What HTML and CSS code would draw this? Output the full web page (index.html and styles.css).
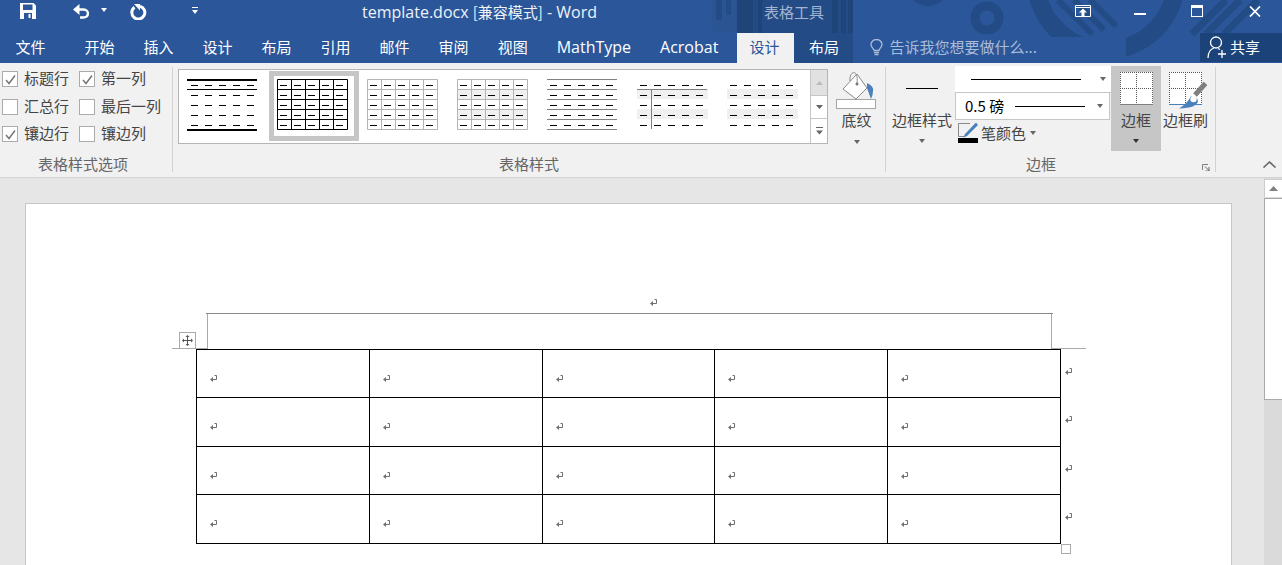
FILE: index.html
```html
<!DOCTYPE html>
<html lang="zh">
<head>
<meta charset="utf-8">
<title>template.docx [兼容模式] - Word</title>
<link rel="stylesheet" href="styles.css">
</head>
<body>
<svg class="defs" aria-hidden="true">
  <defs>
    <symbol id="ret" viewBox="0 0 7 8"><path d="M4.500 1.500H6.500V5.500H2" fill="none" stroke="#707070"/><path d="M0 5.500L3 3V8Z" fill="#707070"/></symbol>
    <g id="dashes" stroke="#000" stroke-dasharray="7 7">
      <path d="M3 6.500H67M3 16.500H67M3 26.500H67M3 36.500H67M3 46.500H67"/>
    </g>
    <path id="grid" fill="none" d="M.5 .5H70.500V50.500H.5ZM14.500 .5V50.500M28.500 .5V50.500M42.500 .5V50.500M56.500 .5V50.500M.5 10.500H70.500M.5 20.500H70.500M.5 30.500H70.500M.5 40.500H70.500"/>
    <path id="bands" fill="#f0f0f0" d="M0 10H71V20H0ZM0 30H71V40H0Z"/>
    <path id="chk" d="M3 8L6 11.500L12 3.500" fill="none" stroke="#777" stroke-width="1.500"/>
    <path id="dots" fill="none" stroke="#555" stroke-dasharray="1 1" d="M0 .5H33M0 16.500H33M.5 0V32M16.500 0V32M32.500 0V32"/>
  </defs>
</svg>

<header class="top">
  <svg class="art" width="1282" height="63" viewBox="0 0 1282 63" aria-hidden="true">
    <rect x="737" width="116" height="63" fill="#234b85"/>
    <path d="M712 0h25v33h-25z" fill="#2a5592"/>
    <path d="M716 0h6v20h-6zM726 0h5v15h-5z" fill="#234b85"/>
    <path d="M737 0h16v33h-16zM758 0h4v33h-4zM832 0h21v33h-21z" fill="#1f4478"/>
    <path d="M838 0h3v33h-3zM846 0h2v33h-2z" fill="#234b85"/>
    <circle cx="928" cy="-14" r="20" fill="#234b85"/>
    <circle cx="987" cy="18" r="12" fill="none" stroke="#234b85" stroke-width="9"/>
    <circle cx="1106" cy="-20" r="70" fill="none" stroke="#234b85" stroke-width="18"/>
    <path d="M1048 12L1082 46M1058 0L1092 34M1074 0L1104 30M1090 0L1116 26" stroke="#234b85" stroke-width="6"/>
    <path d="M1192 34L1226 0M1206 34L1240 0M1224 34L1258 0" stroke="#234b85" stroke-width="7"/>
    <rect x="853" y="37" width="273" height="26" fill="#2b579a"/>
    <path d="M1126 40L1150 36L1126 57Z" fill="#234b85"/>
  </svg>

  <div class="titlebar">
    <svg class="i-save" width="16" height="16" viewBox="0 0 16 16" aria-hidden="true"><path d="M0 0H13.500L16 2.500V16H0Z" fill="#fff"/><path d="M3 1.500H12.500V7H3Z" fill="#2b579a"/><path d="M4 10H12V16H4Z" fill="#2b579a"/><path d="M8.500 11H10.500V15H8.500Z" fill="#fff"/></svg>
    <svg class="i-undo" width="17" height="15" viewBox="0 0 17 15" aria-hidden="true"><path d="M2 5.500H10.500C16.500 5.500 16.500 13.500 10 13.500H7" fill="none" stroke="#fff" stroke-width="2.400"/><path d="M6.500 0V11L0 5.500Z" fill="#fff"/></svg>
    <span class="caret caret-undo"></span>
    <svg class="i-redo" width="17" height="16" viewBox="0 0 17 16" aria-hidden="true"><path d="M4.500 3.200A6.500 6.500 0 1 0 10 2.200" fill="none" stroke="#fff" stroke-width="3"/><path d="M4 0H10V6.500Z" fill="#fff"/></svg>
    <svg class="i-more" width="6" height="8" viewBox="0 0 6 8" aria-hidden="true"><path d="M0 .5H6" stroke="#fff"/><path d="M0 3H6L3 7Z" fill="#fff"/></svg>
    <span class="doc-title">template.docx <span class="cjk">[兼容模式]</span> - Word</span>
    <span class="context">表格工具</span>
    <svg class="i-ropt" width="16" height="12" viewBox="0 0 16 12" aria-hidden="true"><path d="M.5 .5H15.500V11.500H.5ZM.5 2.500H15.500" fill="none" stroke="#fff"/><path d="M8 3.500L12 7.500H9.500V11H6.500V7.500H4Z" fill="#fff"/></svg>
    <span class="i-min"></span>
    <span class="i-max"></span>
    <svg class="i-close" width="12" height="11" viewBox="0 0 12 11" aria-hidden="true"><path d="M1 .5L11 10.500M11 .5L1 10.500" stroke="#fff" stroke-width="1.700"/></svg>
  </div>

  <nav class="tabs">
    <span class="tab tab-file">文件</span>
    <span class="tab">开始</span>
    <span class="tab">插入</span>
    <span class="tab">设计</span>
    <span class="tab">布局</span>
    <span class="tab">引用</span>
    <span class="tab">邮件</span>
    <span class="tab">审阅</span>
    <span class="tab">视图</span>
    <span class="tab latin">MathType</span>
    <span class="tab latin">Acrobat</span>
    <span class="tab tab-active">设计</span>
    <span class="tab">布局</span>
    <svg class="i-bulb" width="13" height="17" viewBox="0 0 13 17" aria-hidden="true"><path d="M4 11.500C4 9.500 1 8.500 1 5.500A5.500 5 0 0 1 12 5.500C12 8.500 9 9.500 9 11.500Z" fill="none" stroke="#a9bcd8" stroke-width="1.300"/><path d="M4 13.500H9M4.500 15.500H8.500" stroke="#a9bcd8" stroke-width="1.400"/></svg>
    <span class="search">告诉我您想要做什么...</span>
    <span class="share">
      <svg width="20" height="24" viewBox="0 0 20 24" aria-hidden="true"><circle cx="9" cy="7.500" r="5.500" fill="none" stroke="#fff" stroke-width="1.300"/><path d="M1 23C1 17 4 14 7 13M11 13.500L13 14.500" fill="none" stroke="#fff" stroke-width="1.300"/><path d="M15 15V23M11 19H19" stroke="#fff" stroke-width="1.300"/></svg>
      <span>共享</span>
    </span>
  </nav>
</header>

<section class="ribbon">
  <div class="group g-options">
    <div class="body options">
      <label class="opt"><span class="box"><svg width="14" height="14" viewBox="0 0 14 14" aria-hidden="true"><use href="#chk"/></svg></span>标题行</label>
      <label class="opt"><span class="box"><svg width="14" height="14" viewBox="0 0 14 14" aria-hidden="true"><use href="#chk"/></svg></span>第一列</label>
      <label class="opt"><span class="box"></span>汇总行</label>
      <label class="opt"><span class="box"></span>最后一列</label>
      <label class="opt"><span class="box"><svg width="14" height="14" viewBox="0 0 14 14" aria-hidden="true"><use href="#chk"/></svg></span>镶边行</label>
      <label class="opt"><span class="box"></span>镶边列</label>
    </div>
    <div class="glabel gl-options">表格样式选项</div>
  </div>
  <div class="sep"></div>

  <div class="group g-styles">
    <div class="body styles">
      <div class="gallery">
        <div class="items">
          <div class="thumb"><svg width="71" height="53" viewBox="0 0 71 53" aria-hidden="true"><path d="M0 0H70V2H0ZM0 50H70V52H0ZM0 10H70V11H0Z" fill="#000"/><use href="#dashes" x="1"/></svg></div>
          <div class="thumb selected"><svg width="71" height="53" viewBox="0 0 71 53" aria-hidden="true"><use href="#grid" stroke="#000"/><use href="#dashes"/></svg></div>
          <div class="thumb"><svg width="71" height="53" viewBox="0 0 71 53" aria-hidden="true"><use href="#grid" stroke="#b4b4b4"/><use href="#dashes"/></svg></div>
          <div class="thumb"><svg width="71" height="53" viewBox="0 0 71 53" aria-hidden="true"><use href="#bands"/><use href="#grid" stroke="#b4b4b4"/><use href="#dashes"/></svg></div>
          <div class="thumb"><svg width="71" height="53" viewBox="0 0 71 53" aria-hidden="true"><path d="M0 .5H70M0 10.500H70M0 20.500H70M0 30.500H70M0 40.500H70M0 50.500H70" stroke="#808080"/><use href="#dashes"/></svg></div>
          <div class="thumb"><svg width="71" height="53" viewBox="0 0 71 53" aria-hidden="true"><use href="#bands"/><path d="M0 10.500H70M14.500 10V50" stroke="#808080" fill="none"/><use href="#dashes"/></svg></div>
          <div class="thumb"><svg width="71" height="53" viewBox="0 0 71 53" aria-hidden="true"><use href="#bands"/><use href="#dashes"/></svg></div>
        </div>
        <div class="gscroll">
          <span class="gs gs-up"><svg width="7" height="4" viewBox="0 0 7 4" aria-hidden="true"><path d="M3.500 0L7 4H0Z" fill="#bbb"/></svg></span>
          <span class="gs gs-down"><svg width="7" height="4" viewBox="0 0 7 4" aria-hidden="true"><path d="M0 0H7L3.500 4Z" fill="#666"/></svg></span>
          <span class="gs gs-more"><svg width="7" height="8" viewBox="0 0 7 8" aria-hidden="true"><path d="M0 .5H7" stroke="#666"/><path d="M0 3.500H7L3.500 7.500Z" fill="#666"/></svg></span>
        </div>
      </div>
      <div class="big shade">
        <svg class="big-icon" width="41" height="40" viewBox="0 0 41 40" aria-hidden="true">
          <path d="M21 4L31 18L20 29L7 19Z" fill="#fff" stroke="#8a8a8a"/>
          <path d="M14 11C13 0 23 -1 21 13" fill="none" stroke="#8a8a8a"/>
          <circle cx="21" cy="14" r="1.500" fill="#777"/>
          <path d="M31 13Q38 16 37 21Q37 25 35 29L31 18Z" fill="#4a80bb"/>
          <rect x=".5" y="29.500" width="39" height="9" fill="#fff" stroke="#a5a5a5"/>
        </svg>
        <span class="big-label">底纹</span>
        <span class="caret"></span>
      </div>
    </div>
    <div class="glabel">表格样式</div>
  </div>
  <div class="sep"></div>

  <div class="group g-borders">
    <div class="body borders">
      <div class="big bstyle">
        <span class="bstyle-line"></span>
        <span class="big-label">边框样式</span>
        <span class="caret"></span>
      </div>
      <div class="pickers">
        <div class="picker p-style"><span class="pline"></span><span class="caret"></span></div>
        <div class="picker p-weight"><span class="weight">0.5 磅</span><span class="pline"></span><span class="caret"></span></div>
        <div class="pen">
          <svg width="20" height="21" viewBox="0 0 20 21" aria-hidden="true"><path d="M12 1.500H.5V14.500H6" fill="none" stroke="#8a8a8a"/><path d="M18 .5L20 3L9 14L5.500 15.500L7 12Z" fill="#4a80bb"/><rect y="16" width="20" height="5" fill="#000"/></svg>
          <span>笔颜色</span>
          <span class="caret"></span>
        </div>
      </div>
      <div class="big bborder">
        <svg class="big-icon" width="33" height="33" viewBox="0 0 33 33" aria-hidden="true">
          <rect width="33" height="32" fill="#fff"/>
          <use href="#dots"/>
          <path d="M0 32.500H33" stroke="#808080"/>
        </svg>
        <span class="big-label">边框</span>
        <span class="caret dark"></span>
      </div>
      <div class="big bpaint">
        <svg class="big-icon" width="38" height="38" viewBox="0 0 38 38" aria-hidden="true">
          <rect width="33" height="32" fill="#fff"/>
          <use href="#dots"/>
          <path d="M0 32.500H33" stroke="#4a80bb"/>
          <path d="M36.500 11.500L26 23" stroke="#808080" stroke-width="5"/>
          <path d="M22 24A6 6 0 0 1 29 29Q28 36 10 36.500Q18 32 22 24Z" fill="#4a80bb"/>
          <circle cx="24.500" cy="27" r="3.200" fill="#fff"/>
        </svg>
        <span class="big-label">边框刷</span>
      </div>
    </div>
    <div class="glabel gl-borders">边框</div>
    <svg class="launcher" width="8" height="7" viewBox="0 0 8 7" aria-hidden="true"><path d="M.5 6V.5H6" fill="none" stroke="#808080"/><path d="M3 2.500L7 6.500M7 3V7H3.500" fill="none" stroke="#666"/></svg>
  </div>
  <div class="sep"></div>
  <svg class="collapse" width="15" height="7" viewBox="0 0 15 7" aria-hidden="true"><path d="M1.500 6.500L7.500 1L13.500 6.500" fill="none" stroke="#666" stroke-width="1.600"/></svg>
</section>

<main class="doc">
  <div class="page">
    <svg class="ret para" width="7" height="8" aria-hidden="true"><use href="#ret"/></svg>
    <div class="frame">
      <span class="crop crop-l"></span>
      <span class="crop crop-r"></span>
      <span class="move"><svg width="11" height="11" viewBox="0 0 11 11" aria-hidden="true"><path d="M5.500 1V10M1 5.500H10" stroke="#555"/><path d="M5.500 0L7.500 2H3.500ZM5.500 11L7.500 9H3.500ZM0 5.500L2 3.500V7.500ZM11 5.500L9 3.500V7.500Z" fill="#555"/></svg></span>
    </div>
    <div class="table-wrap">
      <table class="tbl">
        <tbody>
          <tr class="r-a"><td><svg class="ret" width="7" height="8"><use href="#ret"/></svg></td><td><svg class="ret" width="7" height="8"><use href="#ret"/></svg></td><td class="narrow"><svg class="ret" width="7" height="8"><use href="#ret"/></svg></td><td><svg class="ret" width="7" height="8"><use href="#ret"/></svg></td><td><svg class="ret" width="7" height="8"><use href="#ret"/></svg></td><td class="rowend"><svg class="ret" width="7" height="8"><use href="#ret"/></svg></td></tr>
          <tr class="r-b"><td><svg class="ret" width="7" height="8"><use href="#ret"/></svg></td><td><svg class="ret" width="7" height="8"><use href="#ret"/></svg></td><td class="narrow"><svg class="ret" width="7" height="8"><use href="#ret"/></svg></td><td><svg class="ret" width="7" height="8"><use href="#ret"/></svg></td><td><svg class="ret" width="7" height="8"><use href="#ret"/></svg></td><td class="rowend"><svg class="ret" width="7" height="8"><use href="#ret"/></svg></td></tr>
          <tr class="r-a"><td><svg class="ret" width="7" height="8"><use href="#ret"/></svg></td><td><svg class="ret" width="7" height="8"><use href="#ret"/></svg></td><td class="narrow"><svg class="ret" width="7" height="8"><use href="#ret"/></svg></td><td><svg class="ret" width="7" height="8"><use href="#ret"/></svg></td><td><svg class="ret" width="7" height="8"><use href="#ret"/></svg></td><td class="rowend"><svg class="ret" width="7" height="8"><use href="#ret"/></svg></td></tr>
          <tr class="r-b"><td><svg class="ret" width="7" height="8"><use href="#ret"/></svg></td><td><svg class="ret" width="7" height="8"><use href="#ret"/></svg></td><td class="narrow"><svg class="ret" width="7" height="8"><use href="#ret"/></svg></td><td><svg class="ret" width="7" height="8"><use href="#ret"/></svg></td><td><svg class="ret" width="7" height="8"><use href="#ret"/></svg></td><td class="rowend"><svg class="ret" width="7" height="8"><use href="#ret"/></svg></td></tr>
        </tbody>
      </table>
      <span class="resize"></span>
    </div>
  </div>
  <aside class="vscroll">
    <span class="vs-up"><svg width="9" height="5" viewBox="0 0 9 5" aria-hidden="true"><path d="M4.500 0L9 5H0Z" fill="#808080"/></svg></span>
    <span class="vs-thumb"></span>
  </aside>
</main>
</body>
</html>
```
FILE: styles.css
```css
* { box-sizing: border-box; }
html, body { margin: 0; height: 565px; overflow: hidden; }
body {
  width: 1282px;
  font: 15px/20px "Noto Sans CJK SC", "Open Sans", sans-serif;
  color: #444;
  background: #e6e6e6;
}
svg { display: block; flex: none; }
.defs { position: absolute; width: 0; height: 0; }

/* title + tabs */
.top { position: relative; height: 63px; background: #2b579a; color: #fff; }
.art { position: absolute; left: 0; top: 0; }
.titlebar, .tabs { position: relative; display: flex; align-items: center; }
.titlebar { height: 33px; padding-left: 20px; }
.caret {
  display: block; flex: none; width: 0; height: 0;
  border: 3.5px solid transparent; border-bottom: 0;
  border-top: 4px solid #666;
}
.caret.dark { border-top-color: #333; }
.i-save { margin-top: -11px; }
.i-undo { margin: -11px 0 0 37px; }
.caret-undo { margin: -13px 0 0 11px; border-top-color: #fff; }
.i-redo { margin: -10px 0 0 23px; }
.i-more { margin: -11px 0 0 45px; }
.doc-title {
  margin: -9px 0 0 164px; width: 402px; flex: none; white-space: nowrap;
  font-family: "Open Sans", "Noto Sans CJK SC", sans-serif; font-size: 16px; color: #eef2f8;
}
.cjk { font-size: 15px; font-family: "Noto Sans CJK SC", sans-serif; }
.context { margin-top: -9px; width: 311px; flex: none; color: #a3b5d2; }
.i-ropt { margin-top: -11px; }
.i-min { display: block; width: 12px; height: 2px; margin: -6px 0 0 43px; background: #fff; }
.i-max { display: block; width: 12px; height: 12px; margin: -11px 0 0 45px; border: 1px solid #fff; border-top-width: 3px; }
.i-close { margin: -11px 0 0 46px; }

.tabs { height: 30px; color: #fff; padding-left: 1px; }
.tab { flex: none; padding: 0 14.5px 2px; line-height: 28px; }
.tab-file { margin-right: 10px; }
.latin { font-family: "Open Sans", sans-serif; font-size: 16px; }
.tab-active { margin-left: 4.5px; padding: 0 15px 2px 12px; background: #f1f1f1; color: #2b579a; }
.i-bulb { margin: -2px 0 0 17px; }
.search { margin: -2px 0 0 6px; color: #a9bcd8; }
.share {
  display: flex; align-items: center; gap: 3px;
  height: 29px; width: 82px; margin: 0 0 1px auto; padding: 0 0 1px 7px;
  background: #1c4379;
}

/* ribbon */
.ribbon {
  display: flex; height: 115px;
  background: #f1f1f1; border-bottom: 1px solid #d4d4d4;
}
.group { position: relative; display: flex; flex-direction: column; flex: none; }
.body { height: 90px; }
.glabel { height: 22px; line-height: 22px; text-align: center; color: #666; }
.sep { flex: none; width: 1px; height: 105px; margin-top: 4px; background: #d2d2d2; }

.g-options { width: 172px; }
.gl-options { padding-right: 6px; }
.options {
  display: grid; grid-template-columns: 77px 1fr; grid-auto-rows: 27.5px;
  padding: 8px 0 0 2px; align-content: start;
}
.opt { display: flex; align-items: flex-start; gap: 6px; line-height: 14px; }
.box { flex: none; width: 16px; height: 16px; background: #fff; border: 1px solid #ababab; }

.g-styles { width: 712px; }
.styles { display: flex; padding: 6px 0 0 5px; }
.gallery { display: flex; width: 650px; height: 75px; background: #fff; border: 1px solid #b5b5b5; }
.items { display: flex; flex: none; width: 632px; padding-top: 1px; border-right: 1px solid #c6c6c6; }
.thumb { flex: none; width: 90px; height: 70px; padding: 3px 0 0 3px; border: 5px solid transparent; }
.selected { border-color: #c6c6c6; }
.gscroll { display: flex; flex-direction: column; flex: 1; }
.gs { display: flex; align-items: center; justify-content: center; }
.gs-up { height: 26px; background: #e1e1e1; border-bottom: 1px solid #c6c6c6; }
.gs-down { height: 23px; border-bottom: 1px solid #c6c6c6; }
.gs-more { flex: 1; }

.big { display: flex; flex-direction: column; align-items: center; flex: none; }
.big-label { white-space: nowrap; }
.shade { width: 47px; margin-left: 5px; padding-top: 1px; }
.shade .big-label { margin-top: 0; }
.shade .caret { margin-top: 10px; }

.g-borders { width: 329px; }
.borders { display: flex; padding-top: 3px; }
.gl-borders { padding-right: 19px; }
.bstyle { width: 69px; padding: 0 0 0 3px; }
.bstyle-line { width: 32px; height: 1px; margin-top: 22px; background: #000; }
.bstyle .big-label { margin-top: 21px; }
.bstyle .caret { margin-top: 9px; }

.pickers { display: flex; flex-direction: column; flex: none; width: 156px; }
.picker { position: relative; display: flex; align-items: center; height: 27px; background: #fff; }
.p-style { border-bottom: 1px solid #c6c6c6; }
.p-style .pline { width: 110px; height: 1px; margin-left: 16px; background: #000; }
.p-style .caret { margin-left: 19px; }
.p-weight { width: 155px; border: 1px solid #c6c6c6; border-top: 0; }
.weight { width: 50px; margin-left: 9px; color: #000; white-space: nowrap; }
.p-weight .pline { width: 70px; height: 1px; background: #000; }
.p-weight .caret { margin-left: 12px; }
.pen { display: flex; align-items: center; gap: 3px; margin: 2px 0 0 3px; }
.pen .caret { margin-left: 1px; }

.bborder { width: 50px; height: 85px; padding-top: 6px; background: #c6c6c6; }
.bborder .big-label { margin-top: 5px; }
.bborder .caret { margin-top: 9px; }
.bpaint { width: 50px; padding: 6px 0 0 3px; align-items: flex-start; }
.bpaint .big-icon { margin-left: 5px; }
.bpaint .big-label { margin-top: 0; margin-left: -1px; }
.launcher { position: absolute; left: 316px; top: 101px; }
.collapse { margin: 98px 0 0 46px; }

/* document */
.doc { display: flex; height: 387px; overflow: hidden; }
.page {
  flex: none; width: 1207px; height: 400px; margin: 25px 0 0 25px;
  background: #fff; border: 1px solid #c6c6c6; border-bottom: 0;
  padding-top: 94px;
}
.para { margin-left: 624px; }
.frame {
  position: relative; width: 847px; height: 36px; margin: 7px 0 0 180px;
  border-top: 1px solid #888;
}
.crop { position: absolute; top: 0; width: 35px; height: 35px; border-bottom: 1px solid #aaa; }
.crop-l { left: -34px; border-right: 1px solid #aaa; width: 36px; }
.crop-r { left: 845px; border-left: 1px solid #aaa; }
.move {
  position: absolute; left: -27px; top: 18px;
  display: flex; align-items: center; justify-content: center;
  width: 17px; height: 17px; background: #fff; border: 1px solid #aaa;
}
.table-wrap { position: relative; width: 900px; margin-left: 170px; }
.tbl { border-collapse: collapse; table-layout: fixed; width: 889px; }
.tbl td {
  width: 173px; padding: 24px 0 0 13px; vertical-align: top;
  border: 1px solid #000;
}
.tbl td.narrow { width: 172px; }
.tbl td.rowend { width: 24px; padding: 17px 0 0 4px; border: 0; border-left: 1px solid #000; }
.r-a { height: 48px; }
.r-b { height: 49px; }
.resize {
  position: absolute; left: 865px; top: 195px;
  width: 10px; height: 10px; background: #fff; border: 1px solid #aaa;
}
.vscroll {
  display: flex; flex-direction: column; flex: none;
  width: 18px; margin-left: 32px; padding-top: 1px; background: #dadada;
}
.vs-up {
  display: flex; align-items: center; justify-content: center;
  height: 18px; background: #fff; border: 1px solid #ccc; border-right: 0; border-bottom: 0;
}
.vs-thumb {
  height: 202px; margin-top: 1px; background: #fff;
  border-left: 1px solid #aaa; border-top: 1px solid #aaa; border-bottom: 1px solid #aaa;
}
```
